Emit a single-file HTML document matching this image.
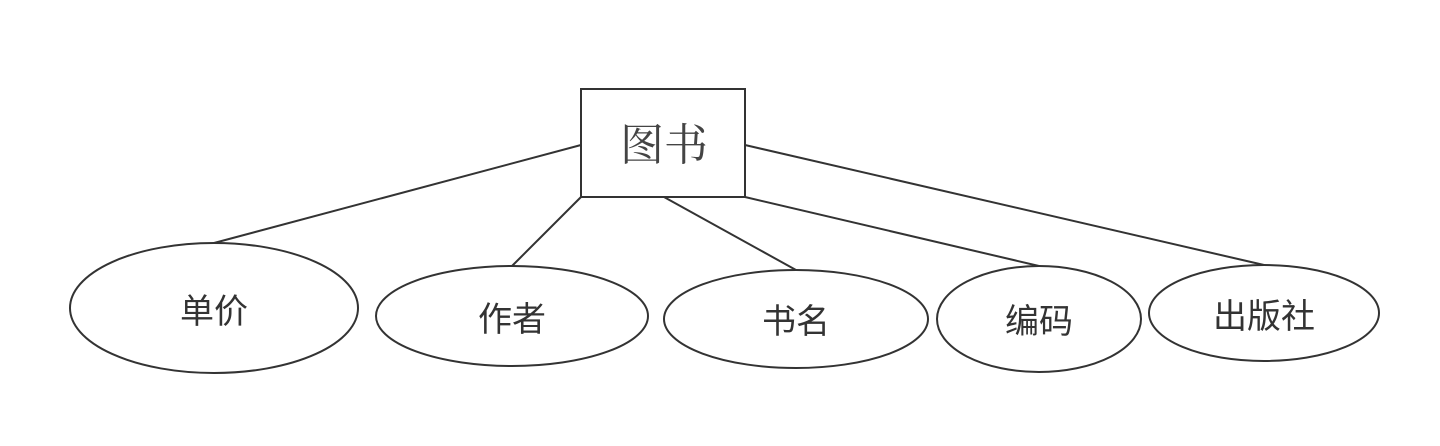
<!DOCTYPE html>
<html><head><meta charset="utf-8"><style>
html,body{margin:0;padding:0;background:#fff;width:1440px;height:446px;overflow:hidden}
</style></head><body>
<svg width="1440" height="446" viewBox="0 0 1440 446" xmlns="http://www.w3.org/2000/svg">
<g stroke="#333" stroke-width="2" fill="none">
<line x1="581" y1="145" x2="214" y2="243"/>
<line x1="581" y1="197" x2="512" y2="266"/>
<line x1="664" y1="197" x2="796" y2="270"/>
<line x1="745" y1="197" x2="1039" y2="266"/>
<line x1="745" y1="145" x2="1264" y2="265"/>
<rect x="581" y="89" width="164" height="108" fill="#fff"/>
<ellipse cx="214" cy="308" rx="144" ry="65" fill="#fff"/>
<ellipse cx="512" cy="316" rx="136" ry="50" fill="#fff"/>
<ellipse cx="796" cy="319" rx="132" ry="49" fill="#fff"/>
<ellipse cx="1039" cy="319" rx="102" ry="53" fill="#fff"/>
<ellipse cx="1264" cy="313" rx="115" ry="48" fill="#fff"/>
</g>
<text x="664" y="160" font-size="44" fill="#444" text-anchor="middle" font-family="'Liberation Serif','Noto Serif CJK SC',serif">图书</text>
<g font-size="34" fill="#333" text-anchor="middle" font-family="'Liberation Sans','Noto Sans CJK SC',sans-serif">
<text x="214" y="323">单价</text>
<text x="512" y="331">作者</text>
<text x="796" y="333">书名</text>
<text x="1039" y="333">编码</text>
<text x="1264" y="328">出版社</text>
</g>
</svg>
</body></html>
